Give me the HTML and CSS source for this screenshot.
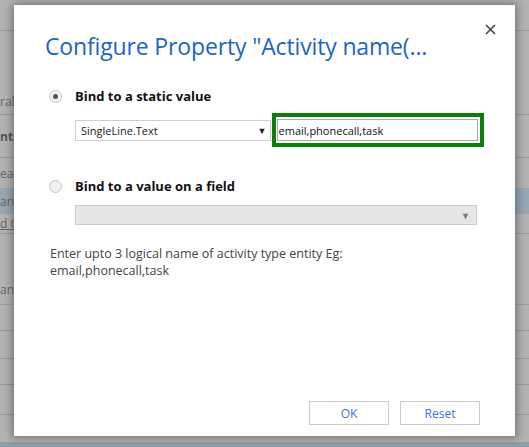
FILE: index.html
```html
<!DOCTYPE html>
<html>
<head>
<meta charset="utf-8">
<link rel="stylesheet" href="styles.css">
</head>
<body>
<div class="page">
  <div class="row r-top"></div>
  <div class="row r1"><span class="frag">ral</span></div>
  <div class="row r2"><span class="frag bold">ntr</span></div>
  <div class="row r3"><span class="frag">ead</span></div>
  <div class="row r4 hl"><span class="frag">anb</span></div>
  <div class="row r5"><span class="frag ul">d C</span></div>
  <div class="row r6"><span class="frag">anb</span></div>
  <div class="row r7"></div>
  <div class="row r8"></div>
  <div class="row r9"></div>
  <div class="row r10"></div>
  <div class="row r11"></div>
  <div class="bottom-strip"></div>
</div>

<div class="dialog">
  <button class="close" aria-label="Close">
    <svg width="11" height="11" viewBox="0 0 11 11"><path d="M1 1 L10 10 M10 1 L1 10" stroke="#444" stroke-width="1.6" fill="none"/></svg>
  </button>
  <h1 class="title">Configure Property "Activity name(...</h1>

  <div class="option">
    <span class="radio checked"></span>
    <span class="opt-label">Bind to a static value</span>
  </div>
  <div class="controls">
    <div class="select">
      <span>SingleLine.Text</span>
      <span class="arrow">▼</span>
    </div>
    <div class="highlight">
      <div class="input">email,phonecall,task</div>
    </div>
  </div>

  <div class="option second">
    <span class="radio"></span>
    <span class="opt-label">Bind to a value on a field</span>
  </div>
  <div class="select disabled">
    <span></span>
    <span class="arrow">▼</span>
  </div>

  <p class="hint">Enter upto 3 logical name of activity type entity Eg:<br>email,phonecall,task</p>

  <div class="buttons">
    <button class="btn">OK</button>
    <button class="btn">Reset</button>
  </div>
</div>
</body>
</html>
```

FILE: styles.css
```css
html, body {
  margin: 0;
  padding: 0;
}
body {
  width: 529px;
  height: 447px;
  overflow: hidden;
  background: #b2b2b2;
  font-family: "Open Sans", "Noto Sans", sans-serif;
  position: relative;
}
.page {
  display: flex;
  flex-direction: column;
  height: 447px;
}
.row {
  border-bottom: 1px solid #9a9a9a;
  box-sizing: border-box;
  display: flex;
  align-items: center;
  font-size: 12px;
  color: #666;
}
.frag {
  margin-left: 0;
  font-family: "Open Sans", sans-serif;
}
.frag.bold { font-weight: 700; color: #555; }
.frag.ul { text-decoration: underline; }
.r-top { height: 31px; }
.r1 { height: 84px; align-items: flex-end; padding-bottom: 4px; }
.r2 { height: 43px; }
.r3 { height: 30px; border-bottom: none; }
.r4 { height: 26px; border-bottom: none; }
.hl { background: #95a6b4; }
.r5 { height: 20px; }
.r6 { height: 71px; border-bottom: 1px solid #a0a0a0; align-items: flex-end; padding-bottom: 6px; }
.r7 { height: 26px; }
.r8 { height: 28px; }
.r9 { height: 26px; }
.r10 { height: 30px; }
.r11 { height: 28px; }
.bottom-strip {
  flex: 1;
  background: #8d9eab;
}

.dialog {
  position: absolute;
  left: 14px;
  top: 5px;
  width: 501px;
  height: 431px;
  background: #fff;
  box-shadow: 0 0 8px 2px rgba(0,0,0,0.35);
  box-sizing: border-box;
  padding: 25px 31px 0 31px;
  display: flex;
  flex-direction: column;
}
.close {
  position: absolute;
  right: 19px;
  top: 19px;
  border: none;
  background: none;
  padding: 0;
  width: 11px;
  height: 11px;
  line-height: 0;
}
.title {
  margin: 0;
  font-weight: 400;
  font-size: 23px;
  line-height: 32px;
  color: #1e64c0;
  letter-spacing: -0.15px;
}
.option {
  display: flex;
  align-items: center;
  margin-top: 25px;
  margin-left: 4px;
  gap: 13px;
}
.option.second { margin-top: 30px; }
.radio {
  width: 11px;
  height: 11px;
  border-radius: 50%;
  border: 1px solid #c8c8c8;
  background: #f0f0f0;
  box-sizing: content-box;
  display: flex;
  align-items: center;
  justify-content: center;
}
.radio.checked::after {
  content: "";
  width: 5px;
  height: 5px;
  border-radius: 50%;
  background: #555;
}
.opt-label {
  font-weight: 700;
  font-size: 13px;
  color: #111;
}
.controls {
  display: flex;
  align-items: center;
  margin-top: 8px;
  margin-left: 30px;
}
.select {
  width: 196px;
  height: 21px;
  border: 1px solid #cfcfcf;
  box-sizing: border-box;
  display: flex;
  align-items: center;
  justify-content: space-between;
  padding: 0 3px 0 5px;
  font-size: 11px;
  color: #222;
  background: #fff;
}
.select .arrow {
  font-size: 9px;
  color: #222;
}
.select.disabled {
  width: 402px;
  height: 20px;
  margin-left: 30px;
  margin-top: 10px;
  background: #e6e6e6;
  border-color: #cccccc;
  padding-right: 6px;
}
.select.disabled .arrow { color: #777; }
.highlight {
  margin-left: 1px;
  border: 4px solid #0a7d0a;
  width: 213px;
  height: 34px;
  box-sizing: border-box;
  padding: 2px 2px 2px 1px;
}
.input {
  height: 100%;
  border: 1px solid #a9a9a9;
  box-sizing: border-box;
  font-size: 11px;
  color: #111;
  display: flex;
  align-items: center;
  padding-left: 1px;
}
.hint {
  margin: 20px 0 0 5px;
  font-size: 12.5px;
  line-height: 17px;
  color: #444;
}
.buttons {
  margin-top: auto;
  margin-bottom: 11px;
  display: flex;
  justify-content: flex-end;
  gap: 11px;
  padding-right: 4px;
}
.btn {
  width: 80px;
  height: 24px;
  border: 1px solid #cccccc;
  background: #fff;
  color: #3f6fd8;
  font-family: "Open Sans", sans-serif;
  font-size: 12px;
  padding: 0;
}
```
